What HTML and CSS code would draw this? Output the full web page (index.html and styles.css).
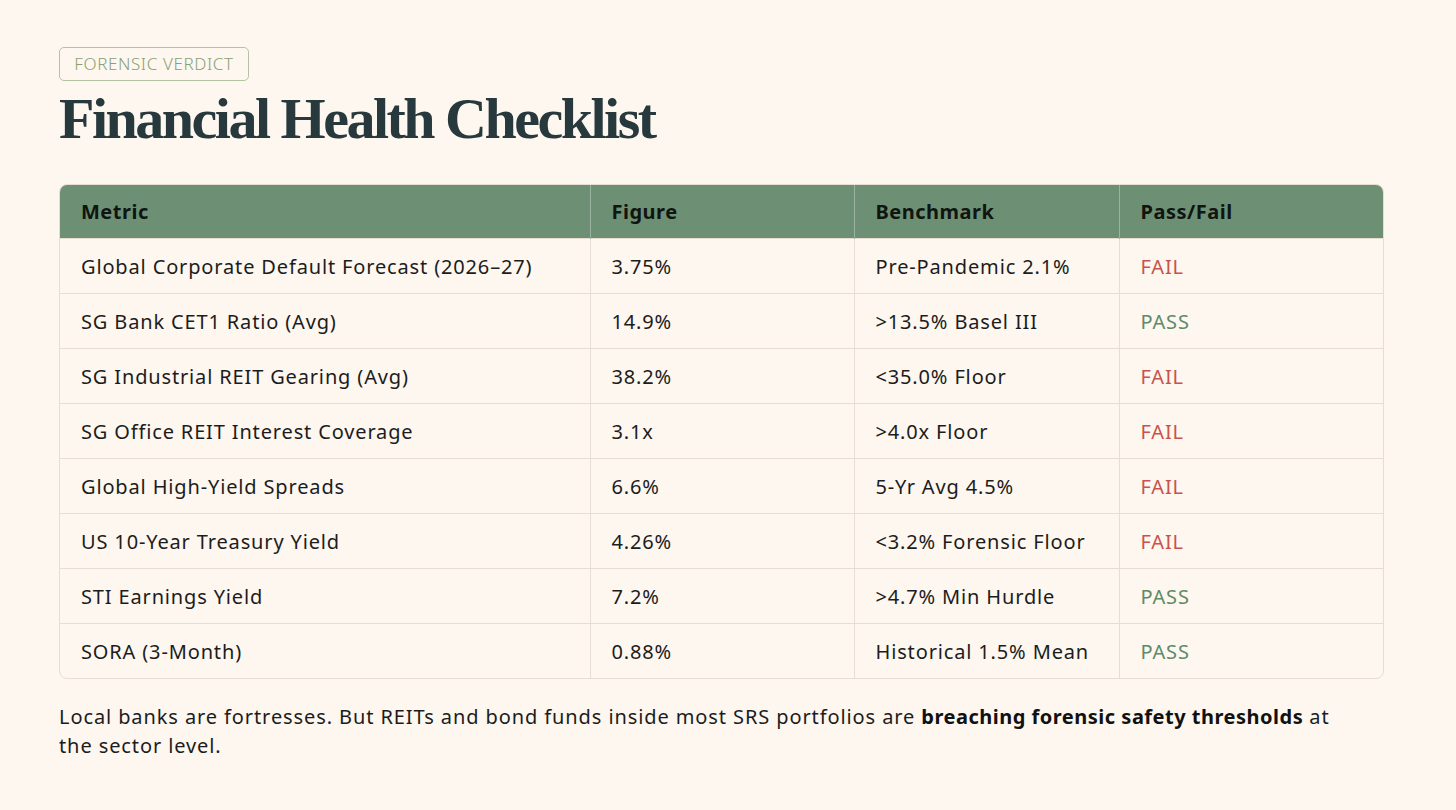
FILE: index.html
```html
<!DOCTYPE html>
<html lang="en">
<head>
<meta charset="utf-8">
<title>Financial Health Checklist</title>
<link rel="stylesheet" href="styles.css">
</head>
<body>
<main class="page">
  <span class="badge">FORENSIC VERDICT</span>
  <h1 class="title">Financial Health Checklist</h1>
  <div class="table-wrap">
    <table class="checklist">
      <colgroup>
        <col class="c1"><col class="c2"><col class="c3"><col class="c4">
      </colgroup>
      <thead>
        <tr><th>Metric</th><th>Figure</th><th>Benchmark</th><th>Pass/Fail</th></tr>
      </thead>
      <tbody>
        <tr><td>Global Corporate Default Forecast (2026–27)</td><td>3.75%</td><td>Pre-Pandemic 2.1%</td><td class="fail">FAIL</td></tr>
        <tr><td>SG Bank CET1 Ratio (Avg)</td><td>14.9%</td><td>&gt;13.5% Basel III</td><td class="pass">PASS</td></tr>
        <tr><td>SG Industrial REIT Gearing (Avg)</td><td>38.2%</td><td>&lt;35.0% Floor</td><td class="fail">FAIL</td></tr>
        <tr><td>SG Office REIT Interest Coverage</td><td>3.1x</td><td>&gt;4.0x Floor</td><td class="fail">FAIL</td></tr>
        <tr><td>Global High-Yield Spreads</td><td>6.6%</td><td>5-Yr Avg 4.5%</td><td class="fail">FAIL</td></tr>
        <tr><td>US 10-Year Treasury Yield</td><td>4.26%</td><td>&lt;3.2% Forensic Floor</td><td class="fail">FAIL</td></tr>
        <tr><td>STI Earnings Yield</td><td>7.2%</td><td>&gt;4.7% Min Hurdle</td><td class="pass">PASS</td></tr>
        <tr><td>SORA (3-Month)</td><td>0.88%</td><td>Historical 1.5% Mean</td><td class="pass">PASS</td></tr>
      </tbody>
    </table>
  </div>
  <p class="note"><span>Local banks are fortresses. But REITs and bond funds inside most SRS portfolios are </span><strong>breaching forensic safety thresholds</strong><span> at</span><br><span>the sector level.</span></p>
</main>
</body>
</html>
```

FILE: styles.css
```css
html, body {
  margin: 0;
  padding: 0;
  background: #fdf7f0;
}
body {
  font-family: "Noto Sans", "Open Sans", sans-serif;
  color: #1d1d1d;
}
.page {
  padding: 47px 72px 0 59px;
  display: flex;
  flex-direction: column;
  align-items: flex-start;
}
.badge {
  display: inline-block;
  box-sizing: border-box;
  height: 34px;
  width: 190px;
  line-height: 32px;
  border: 1px solid #b3c39f;
  border-radius: 5px;
  color: #8aa070;
  font-size: 17px;
  letter-spacing: 0.6px;
  text-align: center;
  font-weight: 300;
}
.title {
  margin: 4px 0 0 0;
  font-family: "Liberation Serif", "Times New Roman", serif;
  font-weight: 700;
  font-size: 58px;
  line-height: 68px;
  letter-spacing: -2.5px;
  color: #27393d;
}
.table-wrap {
  margin-top: 31px;
  width: 1325px;
  border: 1px solid #e7ddd2;
  border-radius: 8px;
  overflow: hidden;
  box-sizing: border-box;
}
.checklist {
  width: 100%;
  border-collapse: collapse;
  table-layout: fixed;
}
.c1 { width: 530px; }
.c2 { width: 264px; }
.c3 { width: 265px; }
.checklist th {
  background: #6d9075;
  color: #101510;
  font-weight: 700;
  font-size: 20px;
  letter-spacing: 0.5px;
  text-align: left;
  height: 53px;
  padding: 0 21px;
  border-left: 1px solid #9db3a1;
}
.checklist td {
  height: 54px;
  padding: 0 21px;
  font-size: 20px;
  letter-spacing: 0.85px;
  color: #1c1c1c;
  border-top: 1px solid #e7ddd2;
  border-left: 1px solid #e7ddd2;
}
.checklist th:first-child,
.checklist td:first-child {
  border-left: none;
}
.checklist td.fail { color: #c9534b; }
.checklist td.pass { color: #5f8a68; }
.note {
  margin: 23px 0 0 0;
  width: 1325px;
  font-size: 20px;
  letter-spacing: 0.9px;
  line-height: 29px;
  color: #1c1c1c;
}
.note strong {
  font-weight: 700;
  letter-spacing: 0.5px;
  color: #111;
}
```
